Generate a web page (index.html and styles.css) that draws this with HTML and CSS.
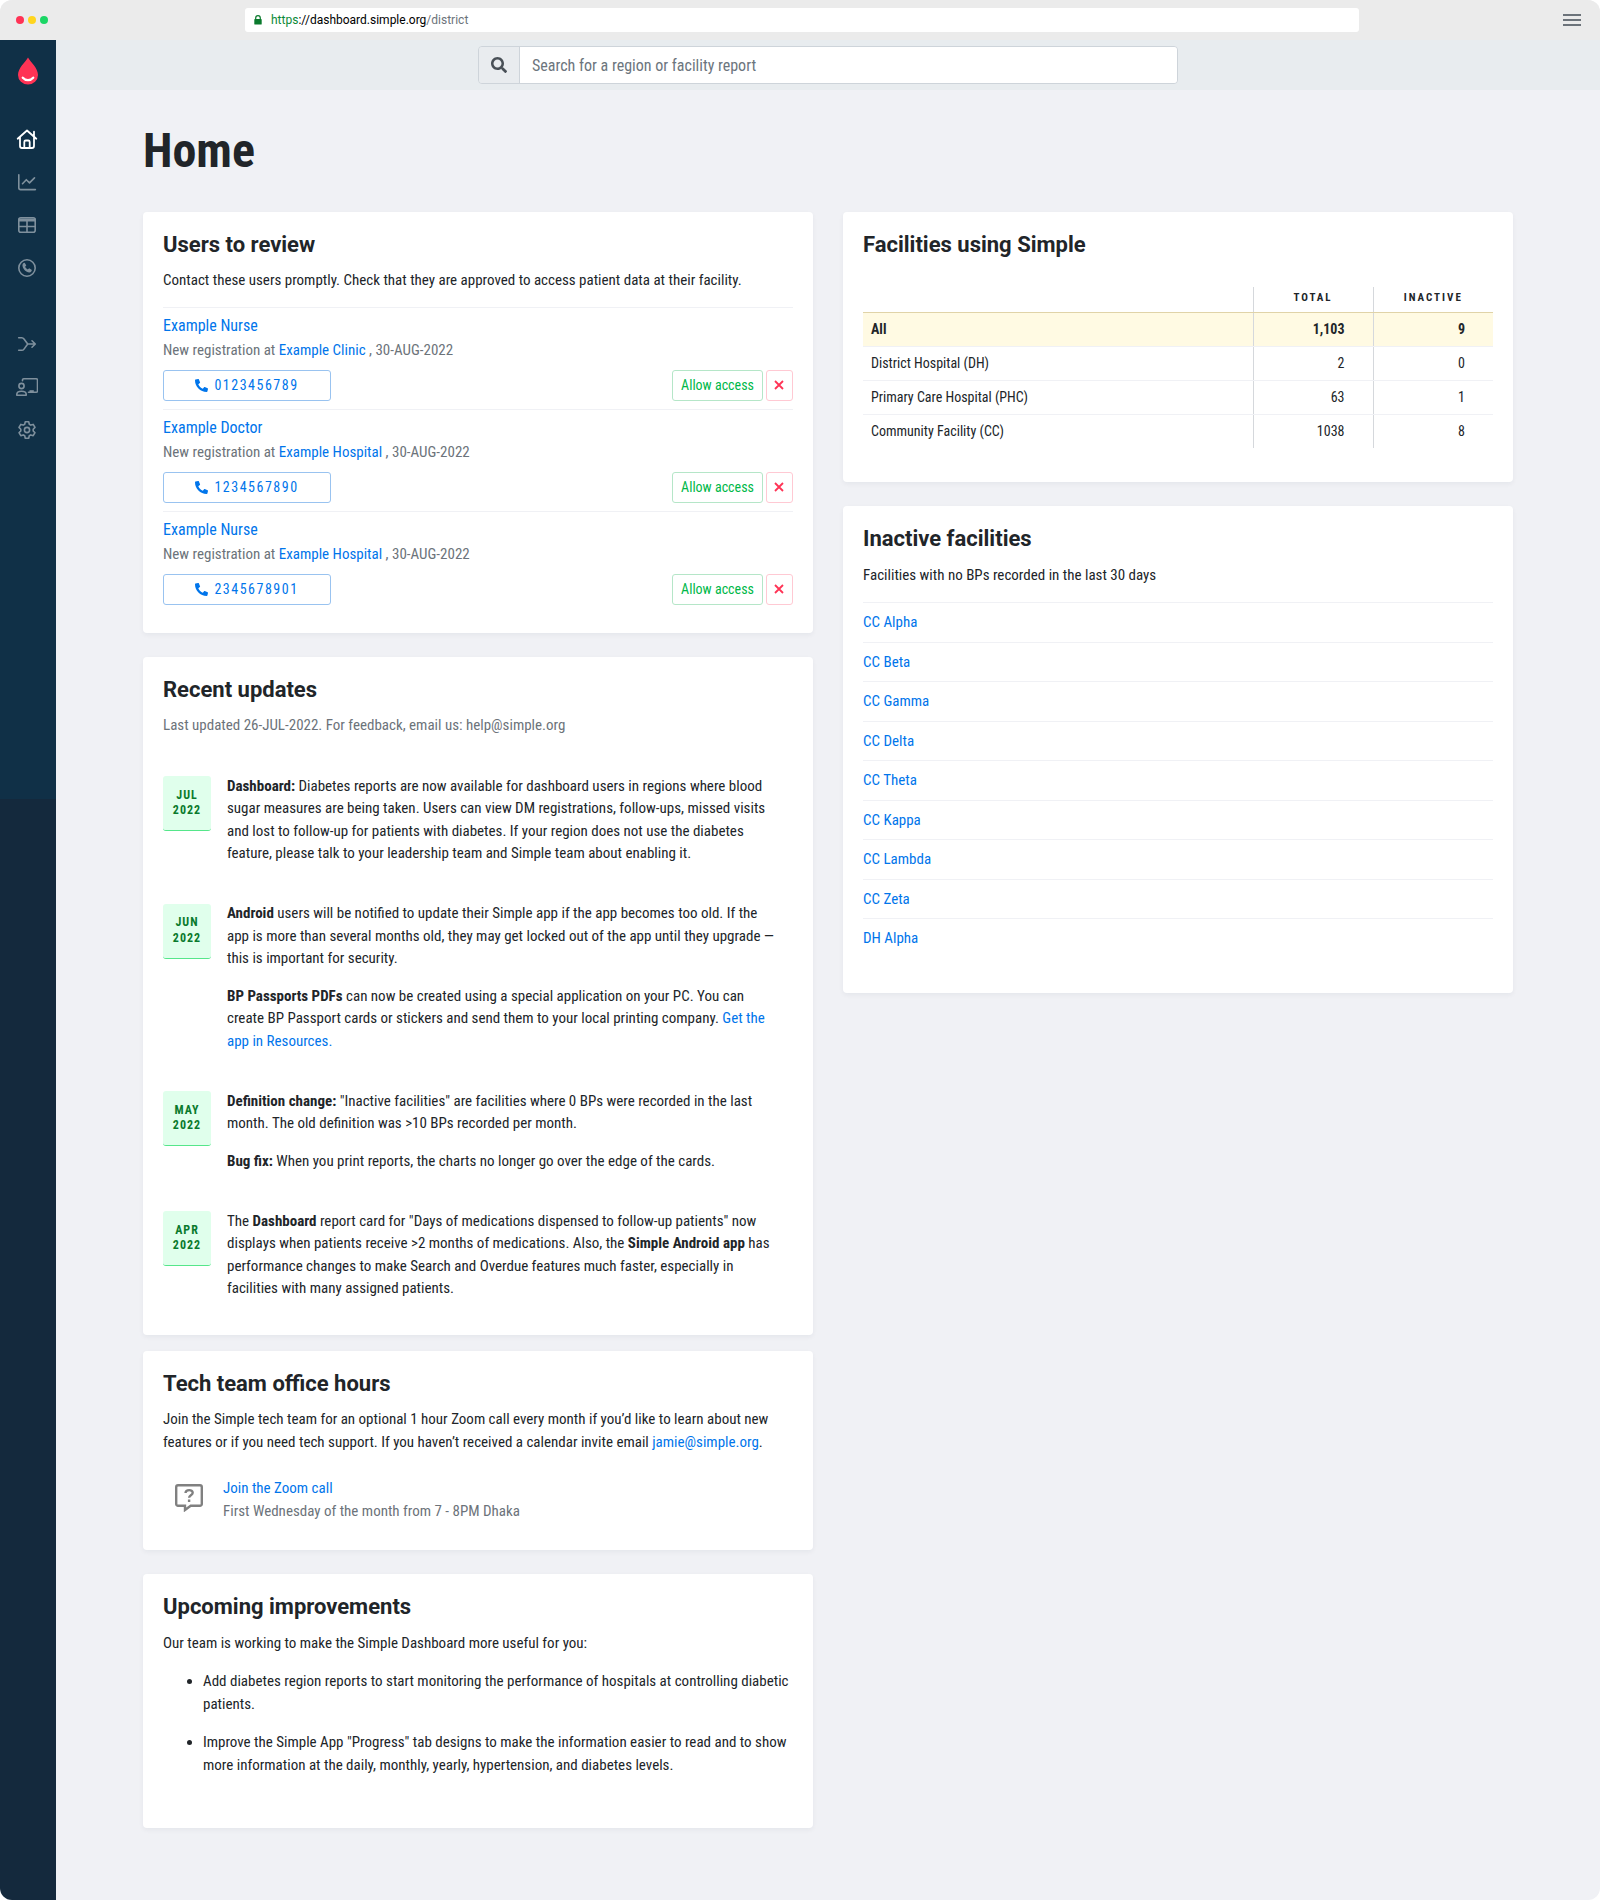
FILE: index.html
```html
<!DOCTYPE html>
<html lang="en">
<head>
<meta charset="utf-8">
<title>Simple Dashboard</title>
<link rel="stylesheet" href="styles.css">
</head>
<body>
<svg class="defs" width="0" height="0" aria-hidden="true">
  <symbol id="phone" viewBox="0 0 512 512"><path transform="matrix(-1 0 0 1 512 0)" d="M493.400 24.600l-104-24c-11.300-2.600-22.900 3.300-27.500 13.900l-48 112c-4.200 9.800-1.400 21.300 6.900 28l60.600 49.600c-36 76.700-98.900 140.500-177.200 177.200l-49.600-60.600c-6.800-8.300-18.200-11.100-28-6.900l-112 48C3.900 366.500-2 378.100.600 389.400l24 104C27.100 504.200 36.700 512 48 512c256.100 0 464-207.500 464-464 0-11.200-7.700-20.900-18.600-23.400z"/></symbol>
  <symbol id="cross" viewBox="0 0 10 10"><path d="M1 1l8 8M9 1l-8 8"/></symbol>
</svg>
<div class="window">
  <header class="chrome">
    <div class="lights"><i class="light red"></i><i class="light yellow"></i><i class="light green"></i></div>
    <div class="url">
      <svg class="lock" viewBox="0 0 8 10" width="8" height="10"><path d="M1.700 4.600V3a2.300 2.300 0 0 1 4.600 0v1.600" fill="none" stroke="#0a7a2d" stroke-width="1.200"/><rect x="0.300" y="4" width="7.400" height="5.600" rx="0.700" fill="#0a7a2d"/></svg>
      <span class="url-text"><span class="scheme">https</span>://dashboard.simple.org<span class="path">/district</span></span>
    </div>
    <div class="burger"><i></i><i></i><i></i></div>
  </header>
  <div class="body">
    <nav class="sidebar">
      <svg class="logo" viewBox="0 0 20 28" width="20" height="28"><path d="M10 .5C12.500 5 20 11 20 18a10 9.500 0 0 1-20 0C0 11 7.500 5 10 .5z" fill="#ff3355"/><path d="M4.800 20.700c2.800 3.200 7.600 3.200 10.400 0" fill="none" stroke="#fff" stroke-width="2.300" stroke-linecap="round"/></svg>
      <div class="nav-group">
        <svg class="active" viewBox="0 0 22 22"><path d="M1.700 10.700 11 2.500l9.300 8.200M18 3.700v4.600M4 9.200V18a2 2 0 0 0 2 2h10a2 2 0 0 0 2-2V9.200M8.300 20v-6a1.500 1.500 0 0 1 1.500-1.500h2.400a1.500 1.500 0 0 1 1.500 1.500v6"/></svg>
        <svg viewBox="0 0 22 22"><path d="M2.800 3.800v13a1.800 1.800 0 0 0 1.800 1.800h14.800M6.500 12.700l3.800-4 3.200 3.200 5-5"/></svg>
        <svg viewBox="0 0 22 22"><rect x="2.800" y="3.700" width="16.400" height="14.600" rx="2"/><path d="M3 5.200h16M3 6.700h16M3 12.500h16M11 7v11"/></svg>
        <svg viewBox="0 0 22 22"><circle cx="11" cy="11" r="8.200"/><path class="solid" d="M7.200 6.200l1.500-.5 1.600 2.800-1.200 1.300c.5 1.200 1.300 2 2.600 2.600l1.500-1.100 2.700 1.700-.6 1.600c-1 1.400-3 1-4.900-.1C8.300 13.300 6.800 11.200 6.500 9c-.1-1 0-2 .7-2.800z"/></svg>
      </div>
      <div class="nav-group">
        <svg viewBox="0 0 22 22"><path d="M2.700 4.700h3.100c1 0 1.600.4 2.200 1.200L11.700 11 8 16.100c-.6.800-1.200 1.200-2.200 1.200H2.700M11.700 11h7.500M16 7.800l3.300 3.200L16 14.200"/></svg>
        <svg viewBox="0 0 22 22"><path d="M6.500 4.800V4A1.300 1.300 0 0 1 7.800 2.700h12.400A1.300 1.300 0 0 1 21.500 4v11a1.300 1.300 0 0 1-1.300 1.300h-7.700"/><circle cx="5.500" cy="10" r="2.600"/><path d="M.8 19.200v-.9c0-1.900 1.700-3.100 4.700-3.100s4.700 1.200 4.700 3.100v.9z"/><path class="solid" d="M13.500 14.200h4.300V16h-4.300z"/></svg>
        <svg viewBox="0 0 22 22"><path d="M9.300 2.700h3.400l.6 2.500 1.500.9 2.400-.7 1.800 3-1.800 1.800v1.700l1.800 1.800-1.800 3-2.400-.8-1.500.9-.6 2.500H9.300l-.6-2.500-1.500-.9-2.400.8-1.800-3 1.800-1.800v-1.700L3 8.400l1.800-3 2.400.7 1.500-.9z"/><circle cx="11" cy="11" r="2.600"/></svg>
      </div>
    </nav>
    <div class="content">
      <div class="topbar">
        <div class="search">
          <span class="search-icon"><svg viewBox="0 0 512 512" width="16" height="16"><path fill="#495057" d="M505 442.700L405.300 343c-4.500-4.500-10.600-7-17-7H372c27.600-35.300 44-79.700 44-128C416 93.100 322.900 0 208 0S0 93.100 0 208s93.100 208 208 208c48.300 0 92.700-16.400 128-44v16.300c0 6.400 2.500 12.500 7 17l99.700 99.700c9.400 9.400 24.600 9.400 33.900 0l28.300-28.300c9.400-9.400 9.400-24.600.1-34zM208 336c-70.700 0-128-57.200-128-128 0-70.700 57.200-128 128-128 70.700 0 128 57.200 128 128 0 70.700-57.200 128-128 128z"/></svg></span>
          <span class="search-input">Search for a region or facility report</span>
        </div>
      </div>
      <main>
        <h1>Home</h1>
        <div class="columns">
          <div class="column">
            <section class="card users">
              <h2>Users to review</h2>
              <p>Contact these users promptly. Check that they are approved to access patient data at their facility.</p>
              <div class="user">
                <a class="name">Example Nurse</a>
                <div class="reg">New registration at <a>Example Clinic</a> , 30-AUG-2022</div>
                <div class="actions"><a class="btn phone"><svg width="13" height="13"><use href="#phone"/></svg>0123456789</a><a class="btn allow">Allow access</a><a class="btn deny"><svg width="10" height="10"><use href="#cross"/></svg></a></div>
              </div>
              <div class="user">
                <a class="name">Example Doctor</a>
                <div class="reg">New registration at <a>Example Hospital</a> , 30-AUG-2022</div>
                <div class="actions"><a class="btn phone"><svg width="13" height="13"><use href="#phone"/></svg>1234567890</a><a class="btn allow">Allow access</a><a class="btn deny"><svg width="10" height="10"><use href="#cross"/></svg></a></div>
              </div>
              <div class="user">
                <a class="name">Example Nurse</a>
                <div class="reg">New registration at <a>Example Hospital</a> , 30-AUG-2022</div>
                <div class="actions"><a class="btn phone"><svg width="13" height="13"><use href="#phone"/></svg>2345678901</a><a class="btn allow">Allow access</a><a class="btn deny"><svg width="10" height="10"><use href="#cross"/></svg></a></div>
              </div>
            </section>
            <section class="card updates">
              <h2>Recent updates</h2>
              <p class="muted">Last updated 26-JUL-2022. For feedback, email us: help@simple.org</p>
              <div class="update">
                <div class="date">JUL<br>2022</div>
                <div class="text"><p><b>Dashboard:</b> Diabetes reports are now available for dashboard users in regions where blood sugar measures are being taken. Users can view DM registrations, follow-ups, missed visits and lost to follow-up for patients with diabetes. If your region does not use the diabetes feature, please talk to your leadership team and Simple team about enabling it.</p></div>
              </div>
              <div class="update">
                <div class="date">JUN<br>2022</div>
                <div class="text"><p><b>Android</b> users will be notified to update their Simple app if the app becomes too old. If the app is more than several months old, they may get locked out of the app until they upgrade — this is important for security.</p>
                <p><b>BP Passports PDFs</b> can now be created using a special application on your PC. You can create BP Passport cards or stickers and send them to your local printing company. <a>Get the app in Resources.</a></p></div>
              </div>
              <div class="update">
                <div class="date">MAY<br>2022</div>
                <div class="text"><p><b>Definition change:</b> "Inactive facilities" are facilities where 0 BPs were recorded in the last month. The old definition was &gt;10 BPs recorded per month.</p>
                <p><b>Bug fix:</b> When you print reports, the charts no longer go over the edge of the cards.</p></div>
              </div>
              <div class="update">
                <div class="date">APR<br>2022</div>
                <div class="text"><p>The <b>Dashboard</b> report card for "Days of medications dispensed to follow-up patients" now displays when patients receive &gt;2 months of medications. Also, the <b>Simple Android app</b> has performance changes to make Search and Overdue features much faster, especially in facilities with many assigned patients.</p></div>
              </div>
            </section>
            <section class="card office">
              <h2>Tech team office hours</h2>
              <p>Join the Simple tech team for an optional 1 hour Zoom call every month if you’d like to learn about new features or if you need tech support. If you haven’t received a calendar invite email <a>jamie@simple.org</a>.</p>
              <div class="call">
                <svg viewBox="0 0 28 28" width="28" height="28"><path d="M3 1.200h22a1.800 1.800 0 0 1 1.800 1.800v17a1.800 1.800 0 0 1-1.800 1.800h-9.300L10 26V21.800H3A1.800 1.800 0 0 1 1.200 20V3A1.800 1.800 0 0 1 3 1.200z"/><path d="M10.500 9c.3-3.800 7.200-3.800 7.200-.3 0 2.500-3.500 2.600-3.600 5M14.100 15.600v2.400"/></svg>
                <div><a>Join the Zoom call</a><br><span class="muted">First Wednesday of the month from 7 - 8PM Dhaka</span></div>
              </div>
            </section>
            <section class="card upcoming">
              <h2>Upcoming improvements</h2>
              <p>Our team is working to make the Simple Dashboard more useful for you:</p>
              <ul>
                <li>Add diabetes region reports to start monitoring the performance of hospitals at controlling diabetic patients.</li>
                <li>Improve the Simple App "Progress" tab designs to make the information easier to read and to show more information at the daily, monthly, yearly, hypertension, and diabetes levels.</li>
              </ul>
            </section>
          </div>
          <div class="column">
            <section class="card facilities">
              <h2>Facilities using Simple</h2>
              <table>
                <thead><tr><th></th><th>TOTAL</th><th>INACTIVE</th></tr></thead>
                <tbody>
                  <tr class="all"><td>All</td><td>1,103</td><td>9</td></tr>
                  <tr><td>District Hospital (DH)</td><td>2</td><td>0</td></tr>
                  <tr><td>Primary Care Hospital (PHC)</td><td>63</td><td>1</td></tr>
                  <tr><td>Community Facility (CC)</td><td>1038</td><td>8</td></tr>
                </tbody>
              </table>
            </section>
            <section class="card inactive">
              <h2>Inactive facilities</h2>
              <p>Facilities with no BPs recorded in the last 30 days</p>
              <div class="list"><a>CC Alpha</a><a>CC Beta</a><a>CC Gamma</a><a>CC Delta</a><a>CC Theta</a><a>CC Kappa</a><a>CC Lambda</a><a>CC Zeta</a><a>DH Alpha</a></div>
            </section>
          </div>
        </div>
      </main>
    </div>
  </div>
</div>
</body>
</html>
```
FILE: styles.css
```css
* { box-sizing: border-box; }
body {
  margin: 0;
  background: #fff;
  color: #212529;
  font: 15px/22.5px "Roboto Condensed", Roboto, "Liberation Sans", sans-serif;
  font-stretch: 75%;
}
.defs { display: none; }
.window { height: 1900px; border-radius: 12px; overflow: hidden; display: flex; flex-direction: column; background: #f0f1f5; }
p, h1, h2, ul { margin: 0; padding: 0; }
a { color: #0075eb; }
.muted { color: #6c737a; }

.chrome { height: 40px; flex: none; background: #ebebeb; display: flex; align-items: center; padding: 0 19px 0 16px; }
.lights { display: flex; gap: 4px; width: 229px; }
.light { width: 8px; height: 8px; border-radius: 50%; }
.light.red { background: #ff3355; }
.light.yellow { background: #ffd51f; }
.light.green { background: #1bd665; }
.url { width: 1114px; height: 24px; border-radius: 3px; background: #fff; display: flex; align-items: center; padding-left: 9px; gap: 9px; color: #000; font: 12px/24px Roboto, sans-serif; font-stretch: 100%; }
.scheme { color: #0a8a37; }
.path { color: #6c737a; }
.burger { margin-left: auto; width: 18px; display: flex; flex-direction: column; gap: 3px; }
.burger i { height: 2px; background: #6c737a; }

.body { flex: 1; display: flex; min-height: 0; }
.sidebar { width: 56px; background: linear-gradient(#103047 759px, #14293d 759px); display: flex; flex-direction: column; align-items: center; padding-top: 17px; }
.logo { display: block; margin-bottom: 43px; }
.nav-group { display: flex; flex-direction: column; gap: 21px; margin: 0 2px 54px 0; }
.nav-group svg { width: 22px; height: 22px; fill: none; stroke: #7f909d; stroke-width: 1.6; stroke-linecap: round; stroke-linejoin: round; display: block; }
.nav-group svg.active { stroke: #fff; stroke-width: 1.8; }
.nav-group .solid { fill: #7f909d; stroke: none; }

.content { flex: 1; }
.topbar { height: 50px; background: #e8ecef; display: flex; padding-top: 6px; padding-left: 422px; }
.search { width: 700px; height: 38px; border: 1px solid #ced4da; border-radius: 4px; display: flex; overflow: hidden; }
.search-icon { width: 41px; border-right: 1px solid #ced4da; background: #e9ecef; display: flex; align-items: center; justify-content: center; }
.search-input { flex: 1; background: #fff; padding-left: 12px; font-size: 16px; line-height: 38px; color: #6c757d; }

main { padding: 34px 87px 0; }
h1 { font-size: 48px; line-height: 54px; font-weight: 700; margin-bottom: 34px; }
.columns { display: grid; grid-template-columns: 670px 670px; gap: 30px; align-items: start; }
.card { background: #fff; border-radius: 4px; padding: 20px; box-shadow: 0 2px 5px rgba(20, 30, 50, .05); margin-bottom: 24px; }
h2 { font: 700 22px/26px Roboto, sans-serif; font-stretch: 100%; margin-bottom: 11px; }

.users { height: 421px; }
.users > p { margin-bottom: 15px; }
.user { height: 102px; border-top: 1px solid #f0f1f5; padding-top: 6px; }
.name { display: block; font-size: 16px; line-height: 24px; }
.reg { color: #6c737a; margin-top: 1.5px; line-height: 23px; }
.actions { display: flex; gap: 3px; margin-top: 7.5px; }
.btn { height: 31px; border: 1px solid; border-radius: 3px; display: flex; align-items: center; justify-content: center; font-size: 14px; }
.phone { width: 168px; gap: 6px; margin-right: auto; border-color: #99c3f0; letter-spacing: 1.5px; }
.phone svg { fill: #0075eb; }
.allow { width: 91px; border-color: #b5e6c8; color: #00b849; }
.deny { width: 27px; border-color: #ffc9d3; padding-right: 1px; }
.deny svg { stroke: #ff3355; stroke-width: 1.8; }

.updates { height: 678px; margin-bottom: 16px; }
.updates > p { margin-bottom: 38px; }
.update { display: flex; gap: 16px; margin-bottom: 37.5px; }
.date { width: 48px; height: 55px; margin-top: 1.5px; border-radius: 3px; border-bottom: 1px solid #55e68a; background: #e0ffec; color: #0a7a2d; font-size: 12px; line-height: 15.5px; font-weight: 700; letter-spacing: 1px; text-align: center; padding-top: 11.5px; }
.text { width: 551px; }
.text p + p { margin-top: 15px; }

.office { height: 199px; }
.call { display: flex; margin: 24px 0 0 12px; line-height: 23px; }
.call svg { fill: none; stroke: #808080; stroke-width: 2.4; margin: 7px 20px 0 0; }

.upcoming { height: 254px; }
.upcoming > p { padding-top: 1px; }
.upcoming ul { padding-left: 40px; margin-top: 15px; }
.upcoming li { margin-bottom: 15px; line-height: 23px; }

.facilities { height: 270px; }
table { border-collapse: collapse; table-layout: fixed; width: 630px; margin-top: 29px; font-size: 14px; line-height: 21px; }
th { width: 120px; height: 25px; font-size: 11px; line-height: 16px; letter-spacing: 2px; padding: 1px 0 4px; border-bottom: 1px solid #e0d3a8; }
th:first-child { width: 390px; }
td { height: 34px; padding: 0 28px 0 8px; text-align: right; border-bottom: 1px solid #f0f1f5; }
td:first-child { text-align: left; }
th + th, td + td { border-left: 1px solid #d5d8dc; }
tbody tr:last-child td { border-bottom: 0; }
.all { background: #fffae3; font-weight: 700; }

.inactive { height: 487px; }
.inactive > p { padding-top: 1px; margin-bottom: 15.5px; }
.list a { display: block; height: 39.5px; border-top: 1px solid #f0f1f5; padding-top: 8px; }
```
